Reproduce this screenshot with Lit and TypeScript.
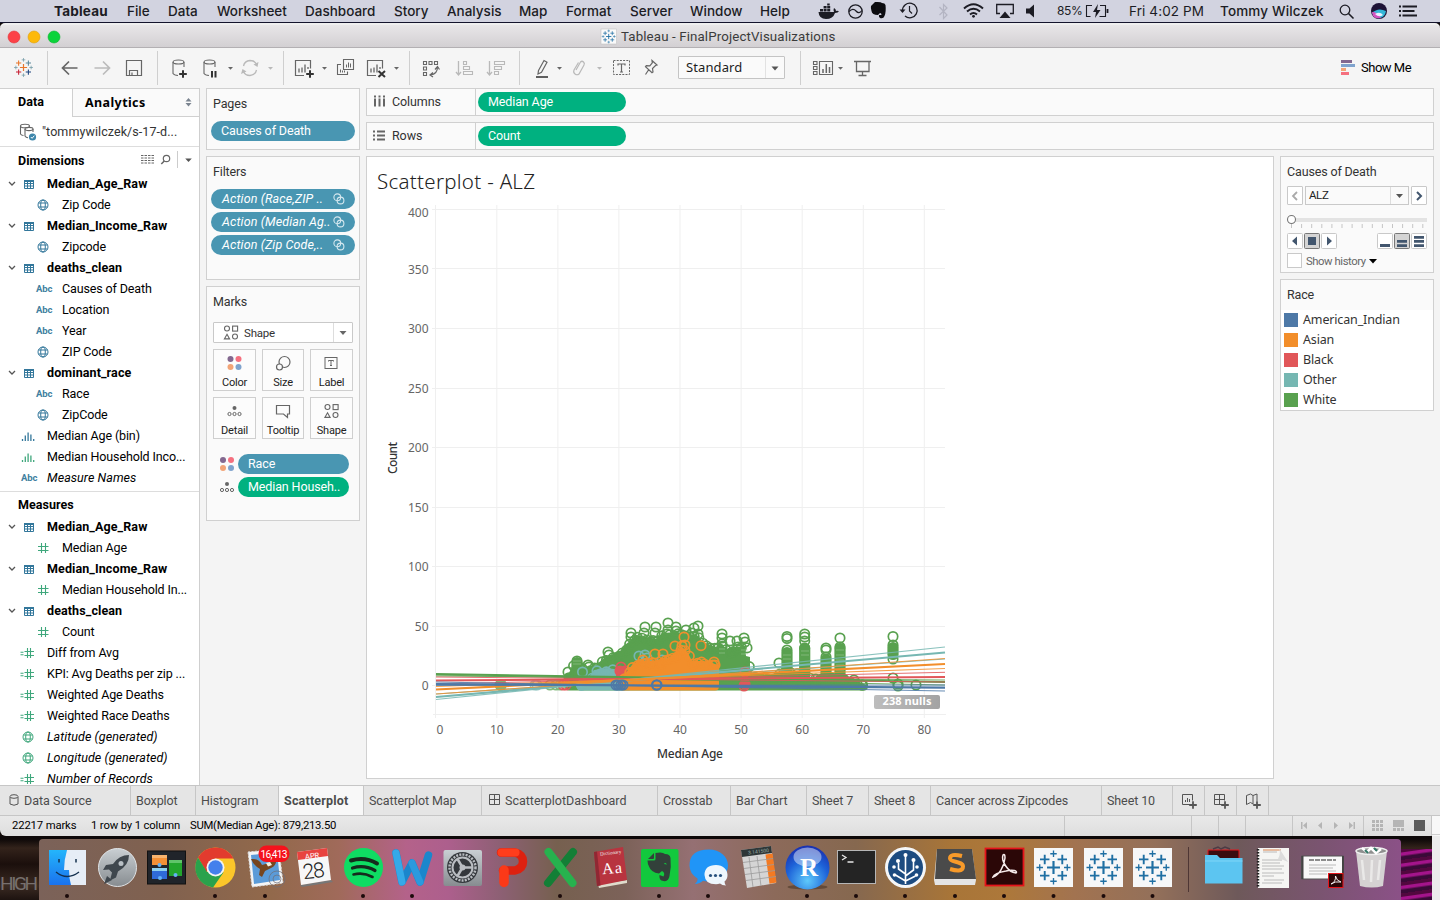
import { LitElement, html, svg, css } from "lit";
import { customElement } from "lit/decorators.js";

/* Each glyph is drawn in window coordinates; seg() cuts the slice a slot shows. */
const seg = (x0: number, x1: number, y0: number, y1: number, body: unknown) =>
  html`<svg class="seg" width=${x1 - x0} height=${y1 - y0} viewBox="${x0} ${y0} ${x1 - x0} ${y1 - y0}">${body}</svg>`;

const G = "#666";
const caret = (x: number, y: number, c = G, s = 2.5) => svg`<path d="M${x - s} ${y - 1.5}h${s * 2}l${-s} ${s + 0.3}z" fill=${c} />`;
const plus = (x: number, y: number, r: number, c: string, w: number) =>
  svg`<path d="M${x - r} ${y}h${2 * r}M${x} ${y - r}v${2 * r}" stroke=${c} stroke-width=${w} fill="none" />`;

const tableauMark = (x: number, y: number, k: number, col: string[]) => svg`
  ${plus(x, y, 4.8 * k, col[0], 1.6 * k)}
  ${[[-6.5, -6, 1], [6.5, -6, 2], [-6.5, 6, 3], [6.5, 6, 4]].map(([a, b, i]) => plus(x + a * k, y + b * k, 3.5 * k, col[i], 1.4 * k))}
  ${[[0, -10.2], [0, 10.2], [-10.2, 0], [10.2, 0]].map(([a, b]) => plus(x + a * k, y + b * k, 2.4 * k, col[5], 1 * k))}`;
const BLUE6 = Array(6).fill("#1f6fa3");

const cyl = (x: number) => svg`<g fill="none" stroke=${G} stroke-width="1.1">
  <ellipse cx=${x + 5.5} cy="62" rx="5.4" ry="2" /><path d="M${x} 62v11.5q1 1.7 5 2M${x + 11} 62v5" /></g>`;

const shapes4 = (x: number, y: number) => svg`<g fill="none" stroke=${G} stroke-width="1.1">
  <circle cx=${x + 3} cy=${y + 3} r="2.5" /><rect x=${x + 8.6} y=${y + 0.6} width="5" height="5" />
  <path d="M${x + 3} ${y + 8.8}l2.6 4.6h-5.2z" /><circle cx=${x + 11} cy=${y + 11} r="2.5" /></g>`;
const dots4 = (x: number, y: number) => svg`
  <circle cx=${x} cy=${y} r="3" fill="#83688f" /><circle cx=${x + 8} cy=${y} r="3" fill="#f5707f" />
  <circle cx=${x} cy=${y + 8} r="3" fill="#f2a477" /><circle cx=${x + 8} cy=${y + 8} r="3" fill="#7fa3cd" />`;
const detail = (x: number, y: number) => svg`<circle cx=${x} cy=${y - 3} r="2" fill=${G} />
  ${[-5, 0, 5].map((d) => svg`<circle cx=${x + d} cy=${y + 3} r="1.6" fill="none" stroke=${G} stroke-width="1" />`)}`;
const globe = (c: string) => svg`<g fill="none" stroke=${c} stroke-width="1"><circle cx="7" cy="7" r="5"/>
  <ellipse cx="7" cy="7" rx="2.3" ry="5"/><path d="M2.7 5h8.6M2.7 9h8.6"/></g>`;

const B = "#33779b";
const GR = "#3fa77c";
const treeIcon: Record<string, unknown> = {
  table: svg`<path d="M2.500 3.500h9v8h-9zM2.500 6.500h9M2.500 9h9M5.500 5v6.500M8.500 5v6.500" fill="none" stroke=${B}/><path d="M2 3h10v2h-10z" fill=${B}/>`,
  globe: globe(B),
  gglobe: globe(GR),
  hash: svg`<path d="M5.500 2v10M9.500 2v10M2 5.500h10.500M2 9.500h10.500" fill="none" stroke=${GR} stroke-width="1.1"/>`,
  ehash: svg`<path d="M6.500 2v10M9.500 2v10M3.500 5.500h9.500M3.500 9.500h9.500M-.500 6.200h3M-.500 8.700h3" fill="none" stroke=${GR} stroke-width="1.1"/>`,
  bars: svg`<path d="M1.5 10v2M4.3 6.500v5.500M7.100 3.500v8.500M9.900 5.500v6.500M12.700 10v2" fill="none" stroke=${B} stroke-width="1.3"/>`,
  gbars: svg`<path d="M1.5 10v2M4.3 6.500v5.500M7.100 3.500v8.500M9.900 5.500v6.500M12.700 10v2" fill="none" stroke=${GR} stroke-width="1.3"/>`,
};

type Row = [kind: string, label: string, level: number];
const DIMS: Row[] = [
  ["table", "Median_Age_Raw", 0], ["globe", "Zip Code", 1], ["table", "Median_Income_Raw", 0], ["globe", "Zipcode", 1],
  ["table", "deaths_clean", 0], ["abc", "Causes of Death", 1], ["abc", "Location", 1], ["abc", "Year", 1], ["globe", "ZIP Code", 1],
  ["table", "dominant_race", 0], ["abc", "Race", 1], ["globe", "ZipCode", 1], ["bars", "Median Age (bin)", 2],
  ["gbars", "Median Household Inco...", 2], ["abc", "Measure Names", 3],
];
const MEAS: Row[] = [
  ["table", "Median_Age_Raw", 0], ["hash", "Median Age", 1], ["table", "Median_Income_Raw", 0], ["hash", "Median Household In...", 1],
  ["table", "deaths_clean", 0], ["hash", "Count", 1], ["ehash", "Diff from Avg", 2], ["ehash", "KPI: Avg Deaths per zip ...", 2],
  ["ehash", "Weighted Age Deaths", 2], ["ehash", "Weighted Race Deaths", 2], ["gglobe", "Latitude (generated)", 3],
  ["gglobe", "Longitude (generated)", 3], ["ehash", "Number of Records", 3],
];

const treeRow = ([kind, label, level]: Row) => html`<div class="row lv${level}">
  ${level === 0 ? html`<svg class="chev" width="8" height="6"><path d="M1 1l3 3 3-3" fill="none" stroke="#555" stroke-width="1.3"/></svg>` : ""}
  ${kind === "abc" ? html`<span class="abc">Abc</span>` : html`<svg class="ti" width="14" height="14">${treeIcon[kind]}</svg>`}
  <span class="lbl">${label}</span></div>`;

/* ---------- scatterplot ---------- */
const C = { green: "#59a14f", orange: "#f28e2b", red: "#e15759", teal: "#76b7b2", blue: "#4e79a7" };
let seed = 7;
const rnd = () => ((seed = (seed * 16807) % 2147483647) / 2147483647);
type Pt = [number, number];
const ring = (x: number, y: number, c: string, o = 1) =>
  svg`<circle cx=${x.toFixed(1)} cy=${y.toFixed(1)} r="4.7" fill="none" stroke=${c} stroke-width="1.7" opacity=${o} />`;
const topAt = (edge: Pt[], x: number) => {
  for (let i = 1; i < edge.length; i++)
    if (x <= edge[i][0]) {
      const [a, b] = [edge[i - 1], edge[i]];
      return a[1] + ((b[1] - a[1]) * (x - a[0])) / (b[0] - a[0]);
    }
  return edge[edge.length - 1][1];
};
const cloud = (edge: Pt[], c: string, step = 4) => {
  const x0 = edge[0][0], x1 = edge[edge.length - 1][0];
  const out: unknown[] = [
    svg`<path d="M${x0 - 4} 686V${edge[0][1] + 2}${edge.map(([x, y]) => `L${x} ${y + 1}`).join("")}L${x1 + 4} ${edge[edge.length - 1][1] + 2}V686q0 4.500-4 4.500H${x0}q-4 0-4-4.500z" fill=${c} />`,
  ];
  for (let x = x0; x <= x1; x += step) out.push(ring(x + rnd() * 2, topAt(edge, x) + 2 + rnd() * 4, c));
  return out;
};
const column = (x: number, y0: number, y1: number, c: string) =>
  svg`<rect x=${x - 5.6} y=${y0 - 5} width="11.2" height=${y1 - y0 + 10} rx="5.500" fill=${c} />`;
const rings = (pts: Pt[], c: string) => pts.map(([x, y]) => ring(x, y, c));

const GREEN: Pt[] = [[569, 672], [573, 663], [581, 663], [584, 668], [596, 664], [604, 657], [612, 654], [620, 650], [626, 643], [630, 640], [636, 634], [646, 636], [656, 638], [662, 632], [676, 631], [697, 634], [703, 641], [716, 646], [720, 642], [727, 648], [735, 646], [745, 645], [746, 655]];
const GREENR: Pt[] = [[748, 664], [753, 673], [762, 673], [770, 674], [782, 670], [800, 671], [812, 677], [824, 672], [842, 673], [864, 683]];
const ORANGE: Pt[] = [[624, 674], [632, 664], [638, 660], [648, 660], [658, 659], [668, 657], [676, 651], [682, 646], [688, 652], [692, 660], [704, 660], [715, 663]];
const TEAL: Pt[] = [[581, 681], [589, 676], [594, 669], [606, 667], [614, 668], [628, 670]];

const LINES: [number, number, string, number][] = [
  [674, 682, C.green, 2], [676, 680, C.green, 1], [675, 685, C.green, 1],
  [677, 682, C.red, 1], [684, 672.3, C.red, 1], [680.5, 677, C.red, 2],
  [699.5, 647, C.teal, 1.2], [694, 659, C.teal, 1.2], [697, 652.5, C.teal, 2.2],
  [694, 658.5, C.orange, 1.2], [686.5, 668.5, C.orange, 1.2], [689.5, 664, C.orange, 2.2],
  [682, 691, C.blue, 1.2], [685.5, 685, C.blue, 1], [684, 687.6, C.blue, 2.2],
];

const chart = () => svg`
  <path d="M435.500 205V718M${[1, 2, 3, 4, 5, 6, 7, 8].map((i) => (435.7 + i * 61.08).toFixed(1) + " 205V718").join("M")}M433 714.500H946" stroke="#efefef" fill="none"/>
  <path d="M${[1, 2, 3, 4, 5, 6, 7, 8].map((i) => `432 ${Math.round(685.5 - i * 59.6) + 0.5}H945`).join("M")}M432 685.500H945" stroke="#efefef" fill="none"/>
  ${[0, 50, 100, 150, 200, 250, 300, 350, 400].map((v) => svg`<text class="ax" text-anchor="end" x="428.500" y=${v === 400 ? 217 : 690 - v * 1.19}>${v}</text>`)}
  ${[0, 10, 20, 30, 40, 50, 60, 70, 80].map((v) => svg`<text class="ax" text-anchor="middle" x=${v ? 435.7 + v * 6.108 : 440} y="734">${v}</text>`)}
  <text class="axt" x="657" y="758" textLength="66">Median Age</text>
  <text class="axt" transform="translate(396.500 474) rotate(-90)" textLength="32">Count</text>
  <text class="title" x="377" y="189" textLength="158">Scatterplot - ALZ</text>
  <g opacity="0.75">${rings([[501, 685], [500, 685], [550, 685], [556, 685], [560, 685]], C.green)}${rings([[535, 685], [537, 685]], C.teal)}${column(501, 684, 686, C.green)}</g>
  ${cloud(GREEN, C.green)}${cloud(GREENR, C.green, 6)}
  ${column(577, 662, 684, C.green)}${column(787, 652, 684, C.green)}${column(804.7, 648, 684, C.green)}
  ${column(826, 659, 684, C.green)}${column(840, 648, 684, C.green)}${column(893, 647, 655, C.green)}
  ${rings([[568, 672], [577, 661], [588, 665], [589, 667], [608, 652], [609, 655], [631, 633], [631, 637], [645, 627], [644, 633], [656, 627], [655, 633], [668, 623], [668, 630], [676, 627], [676, 631], [686, 630], [698, 626], [694, 628], [692, 633], [698, 634],
    [722, 634], [722, 638], [722, 644], [730, 641], [737, 641], [744, 638], [745, 642], [738, 647], [787, 636.5], [787, 638.5], [787, 650], [779, 663], [804.7, 634], [804.7, 637], [804.7, 641], [804.7, 648], [826, 648], [826, 650], [826, 657], [840, 638], [840, 647], [893, 636.5], [893, 645], [893, 659], [893, 678], [898, 684], [898, 686], [916, 685], [854, 680], [862, 685]], C.green)}
  <g stroke="#b9dab3" stroke-width="0.7" fill="none" opacity="0.6"><path d="M573 661h8M573 664h8M783 655h8M783 659h8M801 651h8M801 655h8M836 650h8M836 655h8M836 660h8M836 665h8M836 670h8M719 649h6M719 653h6M741 650h7M741 654h7"/></g>
  ${rings([[563, 685], [566, 685]], C.red)}
  ${cloud(TEAL, C.teal, 5)}${rings([[582.5, 672], [639, 656], [645, 655], [647, 658], [662, 660]], C.teal)}
  ${rings([[621, 667], [620, 671], [625, 671]], C.red)}<path d="M616 667h9l6 10-12 8-3-5z" fill=${C.red}/>
  ${cloud(ORANGE, C.orange)}
  ${rings([[684, 637], [675, 646], [682, 646], [685, 645], [655, 654], [663, 654], [643, 660], [701, 645.7], [714, 662], [715, 665]], C.orange)}
  ${rings([[745, 672], [745, 684], [744, 686]], C.red)}<circle cx="745" cy="684" r="4.5" fill=${C.red}/>
  ${LINES.map(([a, b, c, w]) => svg`<path d="M436 ${a}L945 ${b}" stroke=${c} stroke-width=${w} fill="none" opacity=${w < 2 ? 0.85 : 1} />`)}
  ${rings([[616, 685], [618, 685], [621, 685], [623, 685], [657, 685], [656.5, 685]], C.blue)}<path d="M614 684h11v6h-11z" fill=${C.blue} opacity=".8"/>`;

/* ---------- dock artwork ---------- */
const dot = (x: number) => svg`<circle cx=${x} cy="896" r="2" fill="#1b0a0a" />`;
const tabIcon = (x: number) => svg`<rect x=${x - 19.5} y="848" width="39" height="39" fill="#f6f7f8"/>${tableauMark(x, 867.500, 1.35, BLUE6)}${dot(x)}`;
const DOCK: [number, number, unknown][] = [
  [43, 92, svg`<rect x="49" y="850" width="37" height="35" fill="#1e8cf3"/><path d="M49 850h18q-3 10-3 20h5q0 8 2 15h-22z" fill="url(#fd)"/><path d="M67 850h19v35h-15q-2-7-2-15h-5q0-10 3-20z" fill="#e6edf6"/><path d="M59 859v3.500M76 859v3.500" stroke="#14304e" stroke-width="1.500"/><path d="M56 872q11 9 23 0" stroke="#14304e" stroke-width="1.400" fill="none"/>${dot(67)}`],
  [92, 142, svg`<circle cx="117.500" cy="867.500" r="19" fill="url(#gry)" stroke="#dfe3e6"/><path d="M129 855q-10 0-16 9l-7 1-3 5 6-.500 3 3-2 8 6-3 2-6q11-6 11-16.500z" fill="#3f474e"/><path d="M107 876l-3 8 8-4z" fill="#3f474e"/><circle cx="121" cy="863.500" r="2.500" fill="#b9c0c5"/>`],
  [142, 191, svg`<rect x="147.500" y="851" width="38" height="33" fill="#20242a" stroke="#111"/><rect x="152" y="855" width="15" height="10" fill="#f39035"/><path d="M152 855h15v3h-15z" fill="#f6b36e"/><rect x="152" y="868" width="15" height="11" fill="#2f6bd8"/><path d="M152 868h15v3h-15z" fill="#8fd2ee"/><rect x="169" y="860" width="13" height="16" fill="#22a52d"/><path d="M169 860h13v3h-13z" fill="#5fc46a"/><circle cx="159.500" cy="865" r="2" fill="#63b2f5"/><circle cx="160" cy="878" r="2" fill="#63b2f5"/><circle cx="175.500" cy="875" r="2" fill="#63b2f5"/>`],
  [191, 241, svg`<circle cx="215.500" cy="867.500" r="20" fill="#fbc62a"/><path d="M198 857.500A20.200 20.200 0 0 1 233.500 858.500H215.500L206.500 872z" fill="#e23b2e"/><path d="M198 857.500A20 20 0 0 0 213 887.500L223.500 872.500 207 872z" fill="#2aa24c"/><circle cx="215.500" cy="867.500" r="9" fill="#f4f4f4"/><circle cx="215.500" cy="867.500" r="7.200" fill="#4380ec"/>${dot(215)}`],
  [241, 290, svg`<path d="M248 852l31-3 4 34-31 4z" fill="#f5f5f5" stroke="#d9d9d9" stroke-dasharray="2 1.500"/><path d="M251 855l26-3 3 28-26 4z" fill="#5b9bd8"/><path d="M251 859q8-1 11 6l7-2 7-4q1 6-5 9l-6 3-3 6-3-2 1-6q-6-3-9-10z" fill="#77461f"/><path d="M266 863l4-1 2 3-4 1.500z" fill="#f6f0e0"/><circle cx="277" cy="879" r="8" fill="none" stroke="#6d6d78" opacity=".7"/><circle cx="277" cy="879" r="4" fill="none" stroke="#6d6d78" opacity=".7"/><rect x="258.500" y="845.500" width="31" height="16.500" rx="8" fill="#f5121c"/><text x="260.500" y="857.600" font-size="10.200" fill="#fff" font-family="Roboto" textLength="27">16,413</text>${dot(265)}`],
  [290, 339, svg`<path d="M300 885l31-5 2 2-31 5z" fill="#777"/><path d="M297 852l30-4 4 32-30 5z" fill="#f7f7f7"/><path d="M297 852l30-4 1 8-30 4z" fill="#e8433f"/><text x="305" y="858.500" font-size="7.500" fill="#fff" font-family="Roboto" transform="rotate(-6 312 856)">APR</text><text x="302.500" y="878" font-size="21" fill="#222" font-family="Roboto" font-weight="300" transform="rotate(-6 314 870)" textLength="22">28</text>`],
  [339, 388, svg`<circle cx="363.500" cy="867.500" r="19.500" fill="#0fdc63"/><g fill="none" stroke="#152a1d" stroke-linecap="round"><path d="M351 860.500q14-4 26 3" stroke-width="4"/><path d="M352.500 868q12-3.500 22.500 2.500" stroke-width="3.200"/><path d="M353.500 874.500q10-2.500 19 2.500" stroke-width="2.600"/></g>${dot(363)}`],
  [388, 437, svg`<path d="M396 853l6 29 10-19 8 19 8.500-27" fill="none" stroke="#1b86cc" stroke-width="7.500" stroke-linejoin="round" stroke-linecap="round"/><path d="M396 853l6 29" stroke="#35a9e8" stroke-width="7" stroke-linecap="round"/><path d="M412 863l8 19" stroke="#2b9ade" stroke-width="7" stroke-linecap="round"/>${dot(412)}`],
  [437, 487, svg`<rect x="443.500" y="850" width="38.500" height="36" rx="2" fill="url(#gry)"/><circle cx="462.500" cy="867.500" r="15.500" fill="#34383c"/><circle cx="462.500" cy="867.500" r="13" fill="none" stroke="#b9bdc1" stroke-width="2.500" stroke-dasharray="2 1.200"/><circle cx="462.500" cy="867.500" r="10" fill="none" stroke="#b9bdc1" stroke-width="2"/><circle cx="462.500" cy="867.500" r="3" fill="#b9bdc1"/><path d="M462.500 867.500l-5 8.500M462.500 867.500l-5-8.500M462.500 867.500h10" stroke="#b9bdc1" stroke-width="2.500"/>`],
  [487, 536, svg`<path d="M501 852.500h14q8 2 8 9t-8 9h-12" fill="none" stroke="#dd2110" stroke-width="8.500" stroke-linecap="round" stroke-linejoin="round"/><path d="M501.500 852.500h14" stroke="#ff3d1c" stroke-width="8" stroke-linecap="round"/><path d="M504 870v12.500" stroke="#fb3918" stroke-width="9.500" stroke-linecap="round"/>`],
  [536, 586, svg`<path d="M573 852l-25 31" stroke="#137f36" stroke-width="8" stroke-linecap="round"/><path d="M548.500 852l24 31" stroke="#27b24e" stroke-width="8" stroke-linecap="round"/>${dot(560)}`],
  [586, 635, svg`<path d="M598 884l29-4v3l-28 5z" fill="#dfdccc"/><path d="M594 852l29-5 4 33-30 6z" fill="#b8343f"/><path d="M594 852l3-.600 3.500 34-3.500 .600z" fill="#8f2833"/><text x="602" y="873.500" font-family="Liberation Serif" font-size="16" fill="#fff" transform="rotate(-5 611 868)" textLength="20">Aa</text><text x="600" y="854.500" font-family="Liberation Serif" font-size="5" fill="#eee" transform="rotate(-7 610 853)">Dictionary</text>`],
  [635, 684, svg`<rect x="641" y="849" width="37.500" height="38" rx="2" fill="#12c93d"/><path d="M648 859l6-6v5q0 1-1 1z" fill="#32403a"/><path d="M647.500 860.500h6.500q1.500 0 1.500-1.500v-6q7-1.500 9.500 1 5 0 5.500 4 1 9-1 18-1 6-6 5-5-.500-4-6l4 1.500q2-4-1.500-5.500l-3 2.500q-8-1-10-7-1.500-3-1.500-6z" fill="#32403a"/><path d="M664 864q1-2 3 .500z" fill="#12c93d"/>${dot(659)}`],
  [684, 733, svg`<path d="M709 849.500c11 0 19 7 19 16s-8 16-19 16q-4 0-6-.700-3 3-8 3.200 3-3 2.500-5.500-8-5-8-13 0-16 19.500-16z" fill="#2095f7"/><path d="M716 865c7 0 11.500 4.500 11.500 10q0 4-3 6.500 0 2 1.500 4-4 0-6-2-2 .800-4 .800-11 0-11.500-9.300 0-10 11.500-10z" fill="#eef6fd"/><circle cx="710.500" cy="875.500" r="1.600" fill="#27507e"/><circle cx="715.500" cy="875.500" r="1.600" fill="#27507e"/><circle cx="720.500" cy="875.500" r="1.600" fill="#27507e"/>${dot(708)}`],
  [733, 783, svg`<path d="M741 850l30-4 5 37-29 5z" fill="#d5d5d5"/><path d="M741 850l30-4 1 7-30 4z" fill="#2e3738"/><text x="748" y="853.500" font-size="5" fill="#9fb0a8" font-family="Roboto" transform="rotate(-7 756 852)">3.141500</text><path d="M765.500 854.500l7-1 4 29-7 1.200z" fill="#f47a22"/><path d="M743 862.500l30-4M744 868.500l30-4M745 874.500l30-4M746 880.500l30-4M749 857l4 30M757 856l4 30" stroke="#9a9a9a" stroke-width=".8"/>`],
  [783, 832, svg`<ellipse cx="807.500" cy="887" rx="20" ry="2.500" fill="#4b3626" opacity=".6"/><circle cx="807.500" cy="867.500" r="22" fill="url(#rb)"/><ellipse cx="807.500" cy="857" rx="14" ry="9.500" fill="#fff" opacity=".45"/><text x="800" y="876" font-family="Liberation Serif" font-weight="700" font-size="25" fill="#fff" textLength="17">R</text>${dot(807)}`],
  [832, 881, svg`<rect x="837.500" y="850.500" width="38" height="33" fill="#242424" stroke="#b6b6b6"/><path d="M842 855l4 2.500-4 2.500M847.500 862h6" stroke="#e8e8e8" stroke-width="1.300" fill="none"/>${dot(856)}`],
  [881, 930, svg`<circle cx="905.500" cy="867.500" r="20.500" fill="#f4f6f8"/><circle cx="905.500" cy="867.500" r="17.500" fill="#1c4b80"/><g stroke="#fff" stroke-width="1.600" fill="none"><path d="M905.500 884v-28M905.500 874l-7-5v-6M905.500 876l8-6v-9M905.500 881l-10-6M905.500 881l10-5"/></g><g fill="#fff"><circle cx="905.500" cy="855" r="2"/><circle cx="898" cy="861" r="2"/><circle cx="913.500" cy="860" r="2"/><circle cx="894" cy="867" r="1.800"/><circle cx="917" cy="867" r="1.800"/><circle cx="894.500" cy="875" r="1.800"/><circle cx="916.500" cy="875" r="1.800"/></g>${dot(905)}`],
  [930, 980, svg`<path d="M937 849h35l4 31-1 5h-40l-1-5z" fill="#e4e4e4"/><path d="M937 849h35l4 30h-41z" fill="#4a4a4a"/><path d="M962 856q-12-3-12 2.500c0 4 13 2.500 13 8s-7 4.500-13 2.500" fill="none" stroke="#f79a2a" stroke-width="4"/>${dot(955)}`],
  [980, 1029, svg`<rect x="985.500" y="848.500" width="38" height="37" fill="#2b0707" stroke="#e5141b" stroke-width="1.800"/><path d="M993 877c6-2 11-10 12-19q0-5-2-3c-2 5 4 17 13 18 2-2-3-4-10-2-6 1-12 3-13 6z" fill="none" stroke="#f5eaea" stroke-width="1.500"/>${dot(1004)}`],
  [1029, 1078, tabIcon(1053.5)], [1078, 1128, tabIcon(1103.5)], [1128, 1177, tabIcon(1152.5)],
  [1177, 1200, svg`<path d="M1188.500 847v45" stroke="#4e3634"/>`],
  [1200, 1249, svg`<path d="M1208 850h31v12h-31z" fill="#3a0c10" stroke="#e5141b"/><path d="M1213 849l5-2 3 2 4-2 5 2" stroke="#4d3b45" fill="none" stroke-width="1.500"/><path d="M1205 855h12l3 3h22.500v25.500h-37.500z" fill="#5cc5f1"/><path d="M1205 861h37.500" stroke="#7fd6f8"/>`],
  [1249, 1298, svg`<path d="M1258 848h31v40h-31z" fill="#f5f5f3"/><path d="M1258 849v38" stroke="#222" stroke-width="2.500" stroke-dasharray="1.500 1.500"/><path d="M1263 852h14M1262 860h20M1262 863h18M1262 866h22M1262 869h20M1262 873h22M1262 876h12M1264 880h20M1262 883h20" stroke="#b5b5b5" stroke-width=".9"/><path d="M1263 850h18" stroke="#d9824c"/><path d="M1279 848l9 14q-5-3-10-3 3-5 1-11z" fill="#dcdcdc"/>`],
  [1298, 1347, svg`<path d="M1301.500 856h42v23h-42z" fill="#f8f8f8" stroke="#555"/><path d="M1302.500 856v23M1343 856v23" stroke="#444" stroke-width="2"/><path d="M1309 860h27" stroke="#222" stroke-width="1.200" stroke-dasharray="5 1"/><path d="M1309 865h27M1309 868h24M1309 871h27M1309 874h18" stroke="#aaa" stroke-width=".8"/><rect x="1328.500" y="873.500" width="14.500" height="14" fill="#2b0707" stroke="#e5141b"/><path d="M1331 884q5-2 4.500-8 1 5 5.500 6-6-1-10 2z" fill="none" stroke="#fff" stroke-width=".9"/>`],
  [1347, 1397, svg`<path d="M1356 851h31l-4 35q-11 3-23 0z" fill="#d9d9d7" opacity=".95"/><ellipse cx="1371.500" cy="851" rx="15.500" ry="3.500" fill="#8f8f8f" stroke="#efefef" stroke-width="1.500"/><path d="M1362 848l5 4 4-4 5 5 5-4" stroke="#fff" stroke-width="2.500" fill="none"/><path d="M1365 850l3 3M1374 848l3 3" stroke="#376" stroke-width="2"/><path d="M1362 860l2 20M1372 860l-1 22M1380 860l-2 20" stroke="#f3f3f2" stroke-width="2.500" opacity=".7"/>`],
];

const TABS: [string, number, string][] = [
  ["Data Source", 131, "ds"], ["Boxplot", 65, ""], ["Histogram", 83, ""], ["Scatterplot", 85, "on"], ["Scatterplot Map", 118, ""],
  ["ScatterplotDashboard", 176, "db"], ["Crosstab", 73, ""], ["Bar Chart", 76, ""], ["Sheet 7", 62, ""], ["Sheet 8", 62, ""],
  ["Cancer across Zipcodes", 171, ""], ["Sheet 10", 71, ""],
];

@customElement("app-root")
export class AppRoot extends LitElement {
  static styles = css`
    :host { display: block; width: 1440px; height: 900px; overflow: hidden; font: 13px/16px Roboto, "Liberation Sans", sans-serif; color: #1d1d1d; background: #120b0a; }
    * { box-sizing: border-box; }
    .screen { display: flex; flex-direction: column; height: 900px; }
    .seg { display: block; flex: none; }
    .menubar { display: flex; height: 23px; background: #d2d3e0; border-bottom: 1px solid #14142c; font: 500 13.500px/22px Inter, Roboto, sans-serif; color: #1c1c24; white-space: nowrap; }
    .menus { display: grid; width: 818px; padding-left: 54px; grid-template-columns: 73px 41px 49px 88px 89px 53px 72px 47px 64px 60px 70px 60px; }
    .menus b { font-weight: 700; letter-spacing: 0.2px; }
    .batt { width: 27px; font-size: 12px; font-weight: 400; letter-spacing: -0.4px; }
    .clock { width: 91px; font-weight: 400; letter-spacing: 0.1px; }
    .user { width: 112px; letter-spacing: 0.15px; }
    .titlebar { display: flex; height: 25px; border-top: 2px solid #efefef; border-bottom: 1px solid #b3b0b3; background: linear-gradient(#e8e6e8, #d3d0d3); align-items: center; border-radius: 5px 5px 0 0; }
    .titlebar span { padding-top: 2px; font: 13.300px/20px Roboto, sans-serif; letter-spacing: 0.12px; color: #3b3b3b; }
    .toolbar { display: flex; height: 40px; background: #f5f5f5; }
    .select { display: flex; width: 107px; height: 23px; margin-top: 8px; border: 1px solid #c4c4c4; border-radius: 1px; background: #fafafa; font: 13px/21px "Noto Sans", sans-serif; letter-spacing: 0.1px; }
    .select span { flex: 1; padding-left: 7px; border-right: 1px solid #e2e2e2; }
    .showme { padding-top: 12px; width: 79px; color: #000; letter-spacing: -0.5px; }
    .work { display: flex; height: 697px; background: #f4f4f4; }
    .left { width: 200px; border-right: 1px solid #cfcfcf; background: #fff; color: #000; overflow: hidden; }
    .ptabs { display: flex; height: 29px; border-top: 1px solid #d0d0d0; font: 700 12.500px/26px Roboto, sans-serif; letter-spacing: 0.1px; }
    .ptabs .a { width: 72px; padding-left: 18px; }
    .ptabs .b { display: flex; flex: 1; justify-content: space-between; padding: 0 7px 0 12px; background: #fafafa; border-left: 1px solid #d0d0d0; border-bottom: 1px solid #d0d0d0; font: 700 12.500px/25px "Noto Sans", sans-serif; letter-spacing: 0.4px; align-items: center; }
    .src { display: flex; height: 30px; align-items: center; border-bottom: 1px solid #ddd; font: 12.500px/28px Roboto, sans-serif; color: #333; letter-spacing: 0.08px; }
    .head { display: flex; height: 26px; padding-left: 18px; font-weight: 700; font-size: 12.500px; line-height: 27px; letter-spacing: 0.02px; }
    .head span { width: 120px; }
    .head.m { height: 25px; border-top: 1px solid #ddd; line-height: 25px; }
    .row { display: flex; height: 21px; align-items: center; font-size: 12.500px; line-height: 20px; letter-spacing: -0.13px; white-space: nowrap; }
    .chev { margin-left: 8px; }
    .lv0 { font-weight: 700; letter-spacing: 0.1px; }
    .lv0 .ti { margin-left: 6px; }
    .lv0 .lbl { margin-left: 11px; }
    .lv1 .ti { margin-left: 36px; }
    .lv1 .lbl { margin-left: 12px; }
    .lv1 .abc { margin-left: 36px; }
    .lv2 .ti, .lv3 .ti { margin-left: 21px; }
    .lv2 .lbl, .lv3 .lbl { margin-left: 12px; }
    .lv3 { font-style: italic; letter-spacing: 0.06px; }
    .lv3 .abc { margin-left: 21px; }
    .ti { overflow: visible; }
    .abc { width: 14px; font: 700 9.500px/20px Roboto, sans-serif; font-style: normal; color: #3f7fa0; letter-spacing: -0.1px; }
    .dims { height: 318px; }
    .mid { width: 154px; margin-left: 6px; display: flex; flex-direction: column; gap: 6px; }
    .card { border: 1px solid #d0d0d0; background: #fafafa; }
    .card h4 { margin: 0; padding: 7px 0 0 6px; font: 400 12.500px/16px Roboto, sans-serif; letter-spacing: -0.15px; color: #333; }
    .pages { height: 62px; }
    .filters { height: 124px; }
    .marks { height: 235px; }
    .pill { display: flex; align-items: center; justify-content: space-between; height: 20px; padding: 0 10px; border-radius: 10px; background: #4996b2; color: #fff; font-size: 12.500px; letter-spacing: -0.12px; white-space: nowrap; }
    .pill.g { background: #00b180; }
    .pages .pill { margin: 9px 4px 0; }
    .flist { display: grid; gap: 3px; margin: 9px 4px 0; }
    .flist .pill { font-style: italic; padding-left: 11px; letter-spacing: 0.12px; }
    .mtype { display: flex; align-items: center; width: 140px; height: 21px; margin: 12px 0 6px 6px; border: 1px solid #c9c9c9; font-size: 11.500px; background: #fff; color: #333; border-radius: 1px; }
    .mtype span { flex: 1; height: 19px; line-height: 20px; border-right: 1px solid #ddd; padding-left: 4px; letter-spacing: -0.2px; }
    .mgrid { display: grid; grid-template-columns: 43px 42px 43px; gap: 6px; margin-left: 6px; }
    .mb { height: 42px; border: 1px solid #cfcfcf; background: #fcfcfc; display: flex; flex-direction: column; align-items: center; font-size: 11px; letter-spacing: -0.2px; line-height: 14px; color: #222; }
    .mpill { display: flex; height: 20px; margin: 15px 0 0 6px; }
    .mpill + .mpill { margin-top: 3px; }
    .mpill .pill { width: 111px; }
    .right { width: 1068px; margin-left: 6px; display: flex; flex-direction: column; gap: 6px; }
    .shelf { display: flex; height: 28px; border: 1px solid #d0d0d0; background: #fafafa; }
    .shelf .k { width: 109px; display: flex; align-items: center; border-right: 1px solid #d0d0d0; font-size: 12.500px; letter-spacing: -0.1px; color: #333; }
    .shelf .pill { width: 148px; margin: 3px 0 0 2px; }
    .views { display: flex; gap: 6px; }
    .viz { width: 908px; height: 623px; border: 1px solid #d0d0d0; background: #fff; position: relative; }
    .nulls { position: absolute; left: 507px; top: 538px; width: 66px; height: 14px; border-radius: 2px; background: linear-gradient(90deg, #bdbdbd, #a3a3a3); color: #fff; font: 700 11px/12px "Noto Sans", sans-serif; text-align: center; letter-spacing: 0.1px; }
    .ax { font: 12px "Noto Sans", sans-serif; fill: #666; }
    .axt { font: 500 12px "Noto Sans", sans-serif; fill: #333; }
    .title { font: 300 20.500px "Noto Sans", "Open Sans", sans-serif; fill: #222; }
    .side { width: 154px; display: flex; flex-direction: column; gap: 6px; }
    .ctl { height: 117px; }
    .legend { height: 132px; background: #fff; }
    .legend h4 { height: 30px; background: #fafafa; }
    .alz { display: flex; height: 19px; margin: 6px 0 0 6px; gap: 2px; }
    .sq { width: 16px; border: 1px solid #c9c9c9; border-radius: 1px; background: #fff; display: flex; align-items: center; justify-content: center; }
    .dd { width: 104px; display: flex; border: 1px solid #c9c9c9; font-size: 11.500px; line-height: 17px; padding-left: 3px; letter-spacing: -0.4px; color: #222; }
    .dd span { flex: 1; border-right: 1px solid #ddd; }
    .hist { display: flex; height: 20px; align-items: center; font-size: 11.300px; letter-spacing: -0.42px; color: #666; }
    .hist span { padding-top: 2px; }
    .lg { display: flex; align-items: center; height: 20px; padding-left: 3px; gap: 5px; font: 12.500px/18px "Noto Sans", sans-serif; letter-spacing: -0.15px; color: #333; }
    .sw { width: 14px; height: 14px; }
    .c0 { background: #4e79a7; } .c1 { background: #f28e2b; } .c2 { background: #e15759; } .c3 { background: #76b7b2; } .c4 { background: #59a14f; }
    .sheets { display: flex; height: 31px; border-top: 1px solid #c6c6c6; border-bottom: 1px solid #c6c6c6; background: #e5e5e5; color: #4c4c4c; font-size: 12.500px; letter-spacing: -0.1px; line-height: 29px; white-space: nowrap; }
    .sheet { display: flex; align-items: center; padding-left: 5px; border-right: 1px solid #c6c6c6; }
    .sheet.on { background: #f8f8f8; font-weight: 700; letter-spacing: 0.2px; }
    .sheet.ds, .sheet.db { padding-left: 0; letter-spacing: 0; }
    .status { display: flex; height: 20px; background: linear-gradient(#e9e9e9, #dedede); color: #000; font-size: 11.300px; line-height: 20px; letter-spacing: -0.15px; border-radius: 0 0 0 6px; }
    .status .s1 { padding-left: 12px; width: 91px; } .status .s2 { width: 99px; } .status .s3 { width: 870px; letter-spacing: -0.26px; }
    .desk { display: flex; height: 64px; background: linear-gradient(#0d0808, #0d0808 3px, #33231b 12px, #1b0f0c 28px, #3a2a22 50px, #1d1310); }
    .wl { width: 39px; padding-top: 37px; font: 19px/22px Roboto, sans-serif; color: #77706e; letter-spacing: -2.400px; }
    .dock { display: flex; width: 1362px; height: 61px; margin-top: 3px; padding-left: 4px; border-radius: 4px 4px 0 0; background: linear-gradient(90deg, #7b6259, #80614f 9%, #92694b 17%, #a06a5a 22%, #b4628a 27%, #ad5f8d 30%, #8c6073 34%, #76604f 38%, #7c6259 43%, #957073 48%, #8c6a5a 54%, #86684f 60%, #a87538 67%, #ad783a 71%, #a27350 76%, #93705a 82%, #6e595a 88%, #7a5470 94%, #8b5187); }
    .wr { width: 31px; margin-top: 13px; background: repeating-linear-gradient(172deg, #52083f 0 3px, #a4148b 4px 6px, #3a0a38 8px 11px); }
    .peek { width: 8px; background: #ececec; }
  `;

  private menubar() {
    const K = "#1c1c24";
    return html`<div class="menubar">
      <div class="menus"><b>Tableau</b>${["File", "Data", "Worksheet", "Dashboard", "Story", "Analysis", "Map", "Format", "Server", "Window", "Help"].map((m) => html`<span>${m}</span>`)}</div>
      ${seg(818, 840, 0, 22, svg`<path d="M818.500 12h15.500q-1-2 0-4 2 1 2 3 1.500-.500 3 .300-1 1.700-4 1.700-2 6-9 6-7 0-7.500-7z" fill=${K}/><path d="M820 9h3v2.500h-3zM823.600 9h3v2.500h-3zM827.200 9h3v2.500h-3zM823.600 6h3v2.500h-3zM827.200 6h3v2.500h-3zM827.200 3.500h2.500v2h-2.500z" fill=${K}/>`)}
      ${seg(840, 865, 0, 22, svg`<circle cx="855.500" cy="11.500" r="6.700" fill="none" stroke=${K} stroke-width="1.300"/><path d="M849 11.500q4-4 7-.500t6-.500" fill="none" stroke=${K} stroke-width="1.200"/>`)}
      ${seg(865, 893, 0, 22, svg`<path d="M871 6l4-4q6-.500 7 1 3 0 3.500 2 .800 7-1 11-1 3-4.500 2-1.500-1-1-3h2.500q0-2-1.500-2l-2 2q-6 0-6.500-4-1-3-.500-5z" fill="#0c0c10"/>`)}
      ${seg(893, 935, 0, 22, svg`<path d="M902.500 10.500a7.300 7.300 0 1 1 2.500 5.500" fill="none" stroke=${K} stroke-width="1.300"/><path d="M909.500 6v5l2.500 2.500" fill="none" stroke=${K} stroke-width="1.200"/><path d="M899.500 9.500h6l-3 3.500z" fill=${K}/>`)}
      ${seg(935, 960, 0, 22, svg`<path d="M939.500 7l7.500 8-3.500 3.500v-14L947 8l-7.500 7" fill="none" stroke="#b3b4c2" stroke-width="1.200"/>`)}
      ${seg(960, 990, 0, 22, svg`<g fill="none" stroke=${K} stroke-width="2"><path d="M964 8.500q9.500-8.500 19 0M967 11.500q6.500-5.500 13 0M970 14.500q3.500-3 7 0"/></g><circle cx="973.500" cy="16.300" r="1.400" fill=${K}/>`)}
      ${seg(990, 1020, 0, 22, svg`<path d="M1000 13.500h-3.300v-9h16.600v9h-3.300" fill="none" stroke=${K} stroke-width="1.300"/><path d="M1005 11.500l5.500 6.500h-11z" fill=${K}/>`)}
      ${seg(1020, 1057, 0, 22, svg`<path d="M1026 8.500h3.500l4.500-4v13l-4.500-4h-3.500z" fill=${K}/>`)}
      <div class="batt">85%</div>
      ${seg(1084, 1129, 0, 22, svg`<path d="M1092 5.500h-5.500v11h4M1100 5.500h5.500v11h-6" fill="none" stroke=${K} stroke-width="1.100"/><path d="M1098 4l-5 8h3l-1 6 5.500-8h-3.500z" fill=${K}/><path d="M1107.500 9v4" stroke=${K} stroke-width="1.800"/>`)}
      <div class="clock">Fri 4:02 PM</div><div class="user">Tommy Wilczek</div>
      ${seg(1332, 1360, 0, 22, svg`<circle cx="1345" cy="10" r="4.800" fill="none" stroke=${K} stroke-width="1.300"/><path d="M1348.500 13.500l5 5" stroke=${K} stroke-width="1.600"/>`)}
      ${seg(1360, 1392, 0, 22, svg`<circle cx="1379" cy="11" r="8" fill="#1d1235"/><path d="M1372 13q6-6 14-2-1 6-6 7t-8-5z" fill="#35b8d8"/><path d="M1372 12q5-1 9 6-6 1-8-2z" fill="#d552c0"/><path d="M1375 14q5-3 8 1-4 3-8-1z" fill="#e8f2ff"/>`)}
      ${seg(1392, 1440, 0, 22, svg`<path d="M1402.500 6.500h14.500M1402.500 11h12M1402.500 15.500h14.500" stroke=${K} stroke-width="2"/><path d="M1399 6.500h2M1399 11h2M1399 15.500h2" stroke=${K} stroke-width="2"/>`)}
    </div>`;
  }

  private toolbar() {
    const L = "#b9b9b9";
    const t = (a: number, b: number, s: unknown) => seg(a, b, 48, 88, s);
    const sep = (x: number) => svg`<path d="M${x + 0.5} 51v34" stroke="#cfcfcf"/>`;
    const sheet = (x: number) => svg`<path d="M${x + 9} 75.500h-8.500v-15h15v8" fill="none" stroke=${G} stroke-width="1.200"/><path d="M${x + 4} 72.500v-4M${x + 7} 72.500v-5M${x + 10} 72.500v-8M${x + 13} 69v-2" stroke=${G} stroke-width="1.300"/>`;
    return html`<div class="toolbar">
      ${t(0, 48, svg`${tableauMark(23.5, 67.5, 0.75, ["#e8762c", "#e8762c", "#5b879b", "#c72035", "#1f457e", "#7199a6"])}${sep(47)}`)}
      ${t(48, 86, svg`<path d="M62.500 68H77.500M69 61.500L62.500 68l6.500 6.500" fill="none" stroke="#666" stroke-width="1.700"/>`)}
      ${t(86, 118, svg`<path d="M94.500 68H109M103 61.500l6.500 6.500-6.500 6.500" fill="none" stroke="#bbb" stroke-width="1.700"/>`)}
      ${t(118, 158, svg`<path d="M126.500 60.500h15v15h-15zM129.500 75v-4.500h8v4.500M132 75v-2.500" fill="none" stroke=${G} stroke-width="1.200"/>${sep(157)}`)}
      ${t(158, 195, svg`${cyl(173)}${plus(183, 74, 3.800, "#333", 2)}`)}
      ${t(195, 240, svg`${cyl(204)}<path d="M212 71v6.500M215.500 71v6.500" stroke="#333" stroke-width="2"/>${caret(230.500, 68.500)}`)}
      ${t(240, 284, svg`<path d="M243.500 66q1-5 6.500-5.500 5 0 6.500 4M256.500 70q-1 5-6.500 5.500-5 0-6.500-4" fill="none" stroke=${L} stroke-width="1.300"/><path d="M258.500 62l-1 5-4-2.500zM241 74l1.500-5 4 2.500z" fill=${L}/>${caret(270.500, 68.500, L)}${sep(283)}`)}
      ${t(284, 334, svg`${sheet(295)}${plus(310, 74, 3.800, "#333", 2)}${caret(324.500, 68.500)}`)}
      ${t(334, 362, svg`<path d="M343.500 59.500h10v10h-10zM341 64.500h-3.500v10h10v-3" fill="none" stroke=${G} stroke-width="1.100"/><path d="M346.500 67.500v-3M348.500 67.500v-5M350.500 67.500v-4M340.500 72.500v-3M342.500 72.500v-2M344.500 72.500v-2" stroke=${G}/>`)}
      ${t(362, 410, svg`${sheet(367)}<path d="M378.500 71l6.500 6M385 71l-6.500 6" stroke="#333" stroke-width="2"/>${caret(396.500, 68.500)}${sep(409)}`)}
      ${t(410, 448, svg`<path d="M423.500 61.500h3v3h-3zM429 61.500h3v3h-3zM434.500 61.500h3v3h-3zM423.500 67h3v3h-3zM423.500 72.500h3v3h-3z" fill="none" stroke=${G} stroke-width="1.100"/><path d="M437.500 67q0 7-7 8M435 69.500l2.500-3 2 3M433 72.500l-3 2.500 3 2" fill="none" stroke=${G} stroke-width="1.200"/>`)}
      ${t(448, 480, svg`<path d="M458.500 61v13.500M456 72l2.500 3 2.500-3" fill="none" stroke=${L} stroke-width="1.300"/><path d="M463.500 61.500h3v3h-3zM463.500 66.500h6v3h-6zM463.500 71.500h9v3h-9z" fill="none" stroke=${L} stroke-width="1.100"/>`)}
      ${t(480, 520, svg`<path d="M489.500 61v13.500M487 72l2.500 3 2.500-3" fill="none" stroke=${L} stroke-width="1.300"/><path d="M494.500 61.500h10v3h-10zM494.500 66.500h7v3h-7zM494.500 71.500h4v3h-4z" fill="none" stroke=${L} stroke-width="1.100"/>${sep(519)}`)}
      ${t(520, 568, svg`<path d="M538.500 70.500l5.500-10 3 1.700-5.500 10-3.500 1.800z" fill="none" stroke=${G} stroke-width="1.200"/><path d="M536 77h12" stroke="#444" stroke-width="1.700"/>${caret(559.500, 68.500)}`)}
      ${t(568, 608, svg`<path d="M576 70l4.500-8q1.500-1.500 3 0t.500 3l-5 9q-2 1.500-4 0t-1-4l4.500-7.500" fill="none" stroke=${L} stroke-width="1.200"/>${caret(599.500, 68.500, L)}`)}
      ${t(608, 638, svg`<rect x="613.500" y="60.500" width="16" height="14" fill="none" stroke=${G} stroke-dasharray="2 1.200"/><path d="M618 65.500v-1.500h7v1.500M621.500 64v8M620 72h3" fill="none" stroke=${G} stroke-width="1.200"/>`)}
      ${t(638, 678, svg`<path d="M652 60.500l5 4.500-1.500.500-3 3 .500 3.500-1 .700-6.500-6 .800-1 3.500.200 2.500-3zM648.500 70l-3 4.500" fill="none" stroke=${G} stroke-width="1.200"/>`)}
      <div class="select"><span>Standard</span><svg width="18" height="21"><path d="M5.500 9.500h7l-3.500 4z" fill="#555"/></svg></div>
      ${t(785, 848, svg`${sep(800)}<path d="M813.500 61.500h3.500v3h-3.500zM813.500 66.500h3.500v3h-3.500zM813.500 71.500h3.500v3h-3.500zM819.500 61.500h13v13h-13z" fill="none" stroke=${G} stroke-width="1.100"/><path d="M823 73v-4M826.300 73v-9M829.500 73v-6" stroke=${G} stroke-width="1.500"/>${caret(840.500, 68.500)}`)}
      ${t(848, 1336, svg`<path d="M854 61.500h17M856.500 62v9.500h12.500v-9.500M862.500 71.500v4M858.500 75.500h8" fill="none" stroke=${G} stroke-width="1.300"/>`)}
      ${t(1336, 1361, svg`<path d="M1341 60h11v3h-11z" fill="#83688f"/><path d="M1341 64h14v3h-14z" fill="#7fa3cd"/><path d="M1341 68h5v3h-5z" fill="#f2a477"/><path d="M1341 72h8v3h-8z" fill="#f5707f"/>`)}
      <div class="showme">Show Me</div>
    </div>`;
  }

  private left() {
    return html`<div class="left">
      <div class="ptabs"><div class="a">Data</div><div class="b">Analytics<svg width="7" height="9"><path d="M3.500 0l3 3.500h-6zM3.500 8.500l3-3.500h-6z" fill="#7b8490"/></svg></div></div>
      <div class="src">${seg(0, 42, 117, 145, svg`<g fill="none" stroke="#666" stroke-width="1.100"><ellipse cx="25" cy="125" rx="4.500" ry="1.800"/><path d="M20.500 125v8q1 1.500 3 1.500"/><ellipse cx="29" cy="128" rx="4" ry="1.600"/><path d="M25 128v7q1 1.700 3 1.700M33 128v3"/></g><circle cx="32.500" cy="136" r="3.600" fill="#3d86ab"/><path d="M30.800 136l1.300 1.300 2.200-2.600" stroke="#fff" fill="none"/>`)}"tommywilczek/s-17-d...</div>
      <div class="head"><span>Dimensions</span>${seg(138, 199, 147, 173, svg`<path d="M141 155.500h13M141 158h13M141 160.500h13M141 163h13" stroke="#666" stroke-dasharray="2.500 1"/><circle cx="166.500" cy="158.500" r="3.200" fill="none" stroke="#666" stroke-width="1.200"/><path d="M164.300 161l-3 3" stroke="#666" stroke-width="1.500"/><path d="M177.500 151v17" stroke="#ccc"/>${caret(188.500, 160, "#555", 3.300)}`)}</div>
      <div class="dims">${DIMS.map(treeRow)}</div>
      <div class="head m"><span>Measures</span></div>
      <div>${MEAS.map(treeRow)}</div>
    </div>`;
  }

  private mid() {
    const link = html`<svg width="12" height="12"><g fill="none" stroke="#d5e8ef" stroke-width="1.100"><circle cx="4.300" cy="4.300" r="3.400"/><circle cx="7.500" cy="7.500" r="3.400"/></g></svg>`;
    const mb = (label: string, art: unknown) => html`<div class="mb"><svg width="40" height="26" viewBox="0 0 40 26">${art}</svg>${label}</div>`;
    return html`<div class="mid">
      <div class="card pages"><h4>Pages</h4><div class="pill">Causes of Death</div></div>
      <div class="card filters"><h4>Filters</h4><div class="flist">${["Action (Race,ZIP ..", "Action (Median Ag..", "Action (Zip Code,.."].map((f) => html`<div class="pill">${f}${link}</div>`)}</div></div>
      <div class="card marks"><h4>Marks</h4>
        <div class="mtype"><svg width="26" height="19">${shapes4(10, 2.5)}</svg><span>Shape</span><svg width="18" height="19"><path d="M5.500 8h7l-3.500 4z" fill="#666"/></svg></div>
        <div class="mgrid">
          ${mb("Color", dots4(15.5, 9))}
          ${mb("Size", svg`<circle cx="21.500" cy="12" r="5.500" fill="none" stroke=${G} stroke-width="1.200"/><circle cx="16.500" cy="17" r="3" fill="#fcfcfc" stroke=${G} stroke-width="1.200"/>`)}
          ${mb("Label", svg`<rect x="13" y="7.500" width="12" height="11" fill="none" stroke=${G}/><path d="M16.500 11.500v-1h5v1M19 10.500v5M18 15.500h2" stroke=${G} fill="none"/>`)}
          ${mb("Detail", detail(19.5, 13))}
          ${mb("Tooltip", svg`<path d="M13.500 7.500h13v8.500h-2v3.500l-4-3.500h-7z" fill="none" stroke=${G} stroke-width="1.200"/>`)}
          ${mb("Shape", shapes4(12.5, 6))}
        </div>
        <div class="mpill"><svg width="25" height="20">${dots4(10, 6)}</svg><div class="pill">Race</div></div>
        <div class="mpill"><svg width="25" height="20">${detail(14, 10)}</svg><div class="pill g">Median Househ..</div></div>
      </div></div>`;
  }

  private right() {
    return html`<div class="right">
      <div class="shelf"><div class="k"><svg width="25" height="26"><path d="M8 9.500v8M12.500 9.500v8M17 9.500v8M8 6.500v2M12.500 6.500v2M17 6.500v2" stroke="#666" stroke-width="2"/></svg>Columns</div><div class="pill g">Median Age</div></div>
      <div class="shelf"><div class="k"><svg width="25" height="26"><path d="M6 8.500h2M10 8.500h8M6 12.500h2M10 12.500h8M6 16.500h2M10 16.500h8" stroke="#666" stroke-width="1.800"/></svg>Rows</div><div class="pill g">Count</div></div>
      <div class="views">
        <div class="viz"><svg class="seg" width="906" height="621" viewBox="367 157 906 621">${chart()}</svg><div class="nulls">238 nulls</div></div>
        <div class="side">
          <div class="card ctl"><h4>Causes of Death</h4>
            <div class="alz"><div class="sq"><svg width="8" height="10"><path d="M6 1L2 5l4 4" fill="none" stroke="#aaa" stroke-width="1.800"/></svg></div>
              <div class="dd"><span>ALZ</span><svg width="17" height="17"><path d="M5 7h7l-3.500 4z" fill="#555"/></svg></div>
              <div class="sq"><svg width="8" height="10"><path d="M2 1l4 4-4 4" fill="none" stroke="#42566e" stroke-width="2"/></svg></div></div>
            ${seg(1281, 1433, 205, 251, svg`<path d="M1294 218h133v4h-133z" fill="#e3e3e3"/><circle cx="1291.500" cy="219.500" r="4" fill="#fff" stroke="#777" stroke-width="1.100"/><path d="M${Array.from({ length: 14 }, (_, i) => `${(1291.5 + i * 10.1).toFixed(1)} 224v4`).join("M")}" stroke="#c5c5c5"/>
              <g fill="#fff" stroke="#c9c9c9"><rect x="1287.500" y="233.500" width="15" height="15" rx="1"/><rect x="1321.500" y="233.500" width="15" height="15" rx="1"/><rect x="1377.500" y="233.500" width="15" height="15" rx="1"/><rect x="1411.500" y="233.500" width="15" height="15" rx="1"/></g>
              <g fill="#d4d4d4" stroke="#777"><rect x="1304.500" y="233.500" width="15" height="15" rx="1"/><rect x="1394.500" y="233.500" width="15" height="15" rx="1"/></g>
              <g fill="#42566e"><path d="M1297 236.500v9l-5-4.500zM1327 236.500v9l5-4.500zM1308 237h8v8h-8zM1380 244h10v3h-10zM1397 240h10v2.800h-10zM1397 244.200h10v2.800h-10zM1414 236h10v2.800h-10zM1414 240h10v2.800h-10zM1414 244.200h10v2.800h-10z"/></g>`)}
            <div class="hist">${seg(1281, 1306, 251, 271, svg`<rect x="1287.500" y="253.500" width="14" height="14" fill="#fff" stroke="#c9c9c9"/>`)}<span>Show history</span><svg width="14" height="14"><path d="M3 5h8l-4 4.500z" fill="#000"/></svg></div>
          </div>
          <div class="card legend"><h4>Race</h4>${["American_Indian", "Asian", "Black", "Other", "White"].map((r, i) => html`<div class="lg"><i class="sw c${i}"></i>${r}</div>`)}</div>
        </div>
      </div></div>`;
  }

  private sheets() {
    const e = (a: number, b: number, s: unknown) => seg(a, b, 786, 815, s);
    const S = "#555";
    return html`<div class="sheets">
      ${TABS.map(([n, w, k]) => html`<div class="sheet ${k}" style="width:${w}px">${
        k === "ds" ? e(0, 24, svg`<path d="M10 797v7q4 2.500 8 0v-7" fill="none" stroke=${S}/><ellipse cx="14" cy="796.500" rx="4" ry="1.800" fill="none" stroke=${S}/>`)
        : k === "db" ? e(482, 505, svg`<path d="M489.500 794.500h10v10h-10zM489.500 799.500h10M494.500 794.500v10" fill="none" stroke=${S}/>`) : ""}${n}</div>`)}
      ${e(1173, 1205, svg`<path d="M1190 804.500h-7.500v-10h10v6M1185.500 802v-2M1187.500 802v-4M1189.500 802v-3" fill="none" stroke=${S}/>${plus(1193, 805, 3.800, S, 1.800)}<path d="M1204.500 786v29" stroke="#c6c6c6"/>`)}
      ${e(1205, 1237, svg`<path d="M1222 804.500h-7.500v-10h10v6M1214.500 799.500h10M1219.500 794.500v10" fill="none" stroke=${S}/>${plus(1225, 805, 3.800, S, 1.800)}<path d="M1236.500 786v29" stroke="#c6c6c6"/>`)}
      ${e(1237, 1269, svg`<path d="M1253 804l-2.500-1.500-4 2v-9l4-1.500 2.500 1.500v8.500M1253 795.500l4-1.500v7" fill="none" stroke=${S}/>${plus(1257, 805, 3.800, S, 1.800)}<path d="M1268.500 786v29" stroke="#c6c6c6"/>`)}
    </div>
    <div class="status"><span class="s1">22217 marks</span><span class="s2">1 row by 1 column</span><span class="s3">SUM(Median Age): 879,213.50</span>
      ${seg(1060, 1440, 816, 836, svg`<path d="M1064.500 816v20M1191.500 816v20M1218.500 816v20M1245.500 816v20M1292.500 816v20M1363.500 816v20" stroke="#c6c6c6"/>
        <g fill="#b5b5b5"><path d="M1301 822h1.500v7h-1.500zM1307 822v7l-4-3.500zM1322 822v7l-4-3.500zM1334 822v7l4-3.500zM1349 822v7l4-3.500zM1353.500 822h1.500v7h-1.500z"/>
        ${[0, 1, 2].map((r) => [0, 1, 2].map((c) => svg`<rect x=${1372 + c * 4} y=${820 + r * 4} width="3" height="3"/>`))}
        <path d="M1393 820h11v7h-11zM1393 828h3v3h-3zM1397 828h3v3h-3zM1401 828h3v3h-3z"/></g><path d="M1414 820h11v11h-11z" fill="#5b5b5b"/><rect x="1431.500" y="812" width="20" height="40" rx="4" fill="#f8f8f8" stroke="#c5c5c5"/><path d="M1432 834.500h8" stroke="#d0d0d0"/>`)}
    </div>`;
  }

  render() {
    return html`<div class="screen">
      ${this.menubar()}
      <div class="titlebar">${seg(0, 621, 26, 47, svg`<circle cx="14" cy="37" r="6" fill="#fc4147" stroke="#e0353a" stroke-width=".6"/><circle cx="34" cy="37" r="6" fill="#fdb90a" stroke="#e0a00a" stroke-width=".6"/><circle cx="54" cy="37" r="6" fill="#0bd33a" stroke="#0ab52f" stroke-width=".6"/><rect x="601" y="29" width="15.500" height="15" fill="#fafafa" stroke="#bbb" stroke-width=".5"/>${tableauMark(608.7, 36.5, 0.55, BLUE6)}`)}<span>Tableau - FinalProjectVisualizations</span></div>
      ${this.toolbar()}
      <div class="work">${this.left()}${this.mid()}${this.right()}</div>
      ${this.sheets()}
      <div class="desk">
        <svg width="0" height="0"><defs>
          <linearGradient id="fd" x1="0" y1="0" x2="0" y2="1"><stop offset="0" stop-color="#24b5fb"/><stop offset="1" stop-color="#1a72ee"/></linearGradient>
          <linearGradient id="gry" x1="0" y1="0" x2="0" y2="1"><stop offset="0" stop-color="#c9cfd3"/><stop offset="1" stop-color="#878c90"/></linearGradient>
          <radialGradient id="rb" cx=".5" cy=".8" r=".8"><stop offset="0" stop-color="#5ec9fb"/><stop offset=".6" stop-color="#1d62d8"/><stop offset="1" stop-color="#1a2fae"/></radialGradient>
        </defs></svg>
        <div class="wl">HIGH</div>
        <div class="dock">${DOCK.map(([a, b, s]) => seg(a, b, 839, 900, s))}</div>
        <div class="wr"></div><div class="peek"></div>
      </div>
    </div>`;
  }
}
